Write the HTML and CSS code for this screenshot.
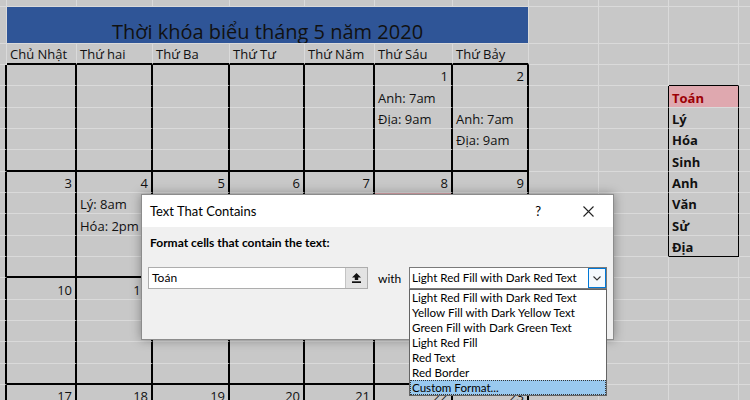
FILE: index.html
```html
<!DOCTYPE html>
<html lang="vi">
<head>
  <meta charset="UTF-8">
  <title>Thời khóa biểu tháng 5</title>
  <link rel="stylesheet" href="styles.css">
</head>
<body>
  <div class="window">
    <table class="sheet">
      <colgroup>
        <col class="c-a"><col class="c-b"><col class="c-c"><col class="c-d"><col class="c-e"><col class="c-f">
        <col class="c-g"><col class="c-h"><col class="c-i"><col class="c-j"><col class="c-k"><col class="c-l">
      </colgroup>
      <tr class="r-top">
        <td></td><td></td><td></td><td></td><td></td><td></td><td></td><td></td><td></td><td></td><td></td><td></td>
      </tr>
      <tr class="r-title">
        <td></td><td colspan="7" class="title">Thời khóa biểu tháng 5 năm 2020</td><td></td><td></td><td></td><td></td>
      </tr>
      <tr class="r-head">
        <td></td><td>Chủ Nhật</td><td>Thứ hai</td><td>Thứ Ba</td><td>Thứ Tư</td><td>Thứ Năm</td><td>Thứ Sáu</td><td>Thứ Bảy</td><td></td><td></td><td></td><td></td>
      </tr>

      <!-- tuần 1 -->
      <tr class="week">
        <td></td><td class="num"></td><td class="num"></td><td class="num"></td><td class="num"></td><td class="num"></td><td class="num">1</td><td class="num">2</td><td></td><td></td><td class="bt"></td><td></td>
      </tr>
      <tr class="week">
        <td></td><td></td><td></td><td></td><td></td><td></td><td>Anh: 7am</td><td></td><td></td><td class="bl"></td><td class="subj hit">Toán</td><td></td>
      </tr>
      <tr class="week">
        <td></td><td></td><td></td><td></td><td></td><td></td><td>Địa: 9am</td><td>Anh: 7am</td><td></td><td class="bl"></td><td class="subj">Lý</td><td></td>
      </tr>
      <tr class="week">
        <td></td><td></td><td></td><td></td><td></td><td></td><td></td><td>Địa: 9am</td><td></td><td class="bl"></td><td class="subj">Hóa</td><td></td>
      </tr>
      <tr class="week wend">
        <td></td><td></td><td></td><td></td><td></td><td></td><td></td><td></td><td></td><td class="bl"></td><td class="subj">Sinh</td><td></td>
      </tr>

      <!-- tuần 2 -->
      <tr class="week">
        <td></td><td class="num">3</td><td class="num">4</td><td class="num">5</td><td class="num">6</td><td class="num">7</td><td class="num">8</td><td class="num">9</td><td></td><td class="bl"></td><td class="subj">Anh</td><td></td>
      </tr>
      <tr class="week">
        <td></td><td></td><td>Lý: 8am</td><td></td><td></td><td></td><td class="hit">Toán: 7am</td><td></td><td></td><td class="bl"></td><td class="subj">Văn</td><td></td>
      </tr>
      <tr class="week">
        <td></td><td></td><td>Hóa: 2pm</td><td></td><td></td><td></td><td></td><td></td><td></td><td class="bl"></td><td class="subj">Sử</td><td></td>
      </tr>
      <tr class="week">
        <td></td><td></td><td></td><td></td><td></td><td></td><td></td><td></td><td></td><td class="bl"></td><td class="subj bb">Địa</td><td></td>
      </tr>
      <tr class="week wend">
        <td></td><td></td><td></td><td></td><td></td><td></td><td></td><td></td><td></td><td></td><td></td><td></td>
      </tr>

      <!-- tuần 3 -->
      <tr class="week">
        <td></td><td class="num">10</td><td class="num">11</td><td class="num">12</td><td class="num">13</td><td class="num">14</td><td class="num">15</td><td class="num">16</td><td></td><td></td><td></td><td></td>
      </tr>
      <tr class="week">
        <td></td><td></td><td></td><td></td><td></td><td></td><td></td><td></td><td></td><td></td><td></td><td></td>
      </tr>
      <tr class="week">
        <td></td><td></td><td></td><td></td><td></td><td></td><td></td><td></td><td></td><td></td><td></td><td></td>
      </tr>
      <tr class="week">
        <td></td><td></td><td></td><td></td><td></td><td></td><td></td><td></td><td></td><td></td><td></td><td></td>
      </tr>
      <tr class="week wend">
        <td></td><td></td><td></td><td></td><td></td><td></td><td></td><td></td><td></td><td></td><td></td><td></td>
      </tr>

      <!-- tuần 4 -->
      <tr class="week">
        <td></td><td class="num">17</td><td class="num">18</td><td class="num">19</td><td class="num">20</td><td class="num">21</td><td class="num">22</td><td class="num">23</td><td></td><td></td><td></td><td></td>
      </tr>
      <tr class="week">
        <td></td><td></td><td></td><td></td><td></td><td></td><td></td><td></td><td></td><td></td><td></td><td></td>
      </tr>
    </table>

    <div class="dialog">
      <div class="dlg-title">
        <span class="dlg-name">Text That Contains</span>
        <span class="dlg-help">?</span>
        <svg class="dlg-close" width="11" height="11" viewBox="0 0 11 11">
          <path d="M0.5 0.5L10.5 10.5M10.5 0.5L0.5 10.5" stroke="#222" stroke-width="1.1" fill="none"/>
        </svg>
      </div>
      <div class="dlg-body">
        <p class="dlg-prompt">Format cells that contain the text:</p>
        <div class="dlg-row">
          <div class="ref-box">
            <span class="ref-text">Toán</span>
            <span class="ref-btn">
              <svg width="9" height="10" viewBox="0 0 9 10">
                <path d="M4.5 0L9 4.5H6.2V7H2.8V4.5H0Z" fill="#111"/>
                <rect x="0" y="8.3" width="9" height="1.7" fill="#111"/>
              </svg>
            </span>
          </div>
          <span class="with">with</span>
          <div class="combo">
            <span class="combo-value">Light Red Fill with Dark Red Text</span>
            <span class="combo-btn">
              <svg width="8" height="5" viewBox="0 0 8 5">
                <path d="M0.5 0.5L4 4L7.5 0.5" stroke="#333" stroke-width="1.1" fill="none"/>
              </svg>
            </span>
            <ul class="combo-list">
              <li>Light Red Fill with Dark Red Text</li>
              <li>Yellow Fill with Dark Yellow Text</li>
              <li>Green Fill with Dark Green Text</li>
              <li>Light Red Fill</li>
              <li>Red Text</li>
              <li>Red Border</li>
              <li class="picked">Custom Format...</li>
            </ul>
          </div>
        </div>
      </div>
    </div>
  </div>
</body>
</html>
```

FILE: styles.css
```css
body {
  margin: 0;
  background-color: #c8c8c8;
}

.window {
  position: relative;
  width: 750px;
  height: 400px;
  overflow: hidden;
  background-color: #c8c8c8;
}

/* bảng tính */
.sheet {
  border-collapse: separate;
  border-spacing: 0;
  table-layout: fixed;
  width: 798px;
  font-family: 'Open Sans', 'Noto Sans', sans-serif;
  font-size: 13px;
  color: #111;
}

.c-a { width: 7px; }
.c-b { width: 70px; }
.c-c { width: 76px; }
.c-d { width: 77px; }
.c-e { width: 75px; }
.c-f { width: 70px; }
.c-g { width: 78px; }
.c-h { width: 76px; }
.c-i { width: 70px; }
.c-j { width: 70px; }
.c-k { width: 70px; }
.c-l { width: 59px; }

.sheet td {
  box-sizing: border-box;
  padding: 0 3px 0 3px;
  border-right: 1px solid #dadada;
  border-bottom: 1px solid #dadada;
  line-height: 17px;
  vertical-align: bottom;
  white-space: nowrap;
  overflow: hidden;
}

.r-top td { height: 7px; }
.r-title td { height: 37px; }
.r-head td { height: 21px; }
.week td { height: 21.33px; }

.title {
  background-color: #2f5597;
  font-size: 20px;
  line-height: 24px;
  text-align: center;
  padding-bottom: 3px !important;
}

.week td:nth-child(-n+8) {
  border-right: 2px solid #000;
}

.r-head td:nth-child(n+2):nth-child(-n+8),
.wend td:nth-child(n+2):nth-child(-n+8) {
  border-bottom: 2px solid #000;
}

.num {
  text-align: right;
}

/* danh sách môn học */
.subj {
  font-weight: bold;
  border-right: 1px solid #000 !important;
}

.bl { border-right: 1px solid #000 !important; }
.bt { border-bottom: 1px solid #000 !important; }
.bb { border-bottom: 1px solid #000 !important; }

.hit {
  background-color: #dfa8af;
  color: #9c0006;
}

/* hộp thoại */
.dialog {
  position: absolute;
  left: 141px;
  top: 194px;
  width: 473px;
  height: 146px;
  box-sizing: border-box;
  border: 1px solid #8c8c8c;
  background-color: #f0f0f0;
  box-shadow: 0 0 10px rgba(0, 0, 0, 0.35);
  font-family: 'Lato', 'Noto Sans', sans-serif;
  font-size: 12px;
  color: #000;
}

.dlg-title {
  display: flex;
  align-items: center;
  height: 32px;
  padding: 0 19px 0 8px;
  background-color: #fff;
  font-size: 13px;
}

.dlg-name {
  flex: 1;
}

.dlg-help {
  margin-right: 42px;
}

.dlg-body {
  padding: 0 6px;
}

.dlg-prompt {
  margin: 8px 0 0 2px;
  line-height: 16px;
  font-weight: bold;
}

.dlg-row {
  display: flex;
  align-items: center;
  margin-top: 16px;
}

.ref-box {
  display: flex;
  width: 220px;
  height: 22px;
  box-sizing: border-box;
  border: 1px solid #adadad;
  background-color: #fff;
}

.ref-text {
  flex: 1;
  padding-left: 3px;
  line-height: 20px;
}

.ref-btn {
  display: flex;
  align-items: center;
  justify-content: center;
  width: 21px;
  background-color: #e3e3e3;
  border-left: 1px solid #c4c4c4;
}

.with {
  margin-left: 10px;
  width: 31px;
}

.combo {
  position: relative;
  display: flex;
  width: 198px;
  height: 22px;
  box-sizing: border-box;
  border: 1px solid #7a7a7a;
  background-color: #fff;
  font-size: 11.6px;
}

.combo-value {
  flex: 1;
  padding-left: 2px;
  line-height: 20px;
}

.combo-btn {
  display: flex;
  align-items: center;
  justify-content: center;
  width: 18px;
  height: 20px;
  box-sizing: border-box;
  border: 1px solid #0078d7;
  background-color: #f5f9fd;
}

.combo-list {
  position: absolute;
  top: 21px;
  left: -1px;
  width: 198px;
  box-sizing: border-box;
  margin: 0;
  padding: 0;
  list-style: none;
  border: 1px solid #646464;
  background-color: #fff;
}

.combo-list li {
  height: 15px;
  line-height: 15px;
  padding-left: 2px;
}

.combo-list li.picked {
  background-color: #99c9ef;
  outline: 1px dotted #333;
  outline-offset: -1px;
}
```
